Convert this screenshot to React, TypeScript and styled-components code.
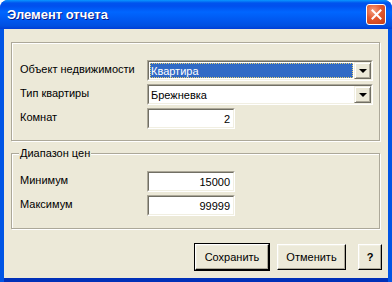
import React from "react";
import styled, { createGlobalStyle } from "styled-components";

const Global = createGlobalStyle`
  html, body { margin: 0; padding: 0; background: #ffffff; }
  body { font-family: "Liberation Sans", Arial, sans-serif; }
`;

const Window = styled.div`
  width: 392px;
  height: 282px;
  display: flex;
  flex-direction: column;
  box-sizing: border-box;
  background: #0055e5;
  border-radius: 8px 8px 0 0;
  overflow: hidden;
`;

const TitleBar = styled.div`
  height: 29px;
  flex: none;
  display: flex;
  align-items: center;
  justify-content: space-between;
  padding: 0 6px 0 7px;
  box-sizing: border-box;
  background: linear-gradient(
    to bottom,
    #0997ff 0px,
    #0053ee 3px,
    #0050ee 6px,
    #0066ff 12px,
    #0058f0 20px,
    #0050e0 26px,
    #003dd7 29px
  );
`;

const Title = styled.span`
  color: #ffffff;
  font-family: "Liberation Sans", Arial, sans-serif;
  font-weight: bold;
  font-size: 13px;
  text-shadow: 1px 1px 0 #0a1883;
`;

const CloseButton = styled.div`
  width: 20px;
  height: 21px;
  box-sizing: border-box;
  border: 1px solid #ffffff;
  border-radius: 3px;
  background: radial-gradient(circle at 35% 30%, #f5a080 0%, #e2582f 45%, #c53d14 100%);
  display: flex;
  align-items: center;
  justify-content: center;
`;

const Frame = styled.div`
  flex: 1;
  display: flex;
  margin: 0 4px 4px 4px;
  box-shadow: 0 4px 0 0 #0030b8;
`;

const Client = styled.div`
  flex: 1;
  background: #ece9d8;
  display: flex;
  flex-direction: column;
  padding: 13px 8px 0 7px;
  font-size: 11px;
  color: #000;
`;

const Group = styled.div<{ $top?: number }>`
  position: relative;
  border: 1px solid #aca899;
  box-shadow: inset 1px 1px 0 #ffffff, 1px 1px 0 #ffffff;
  margin-top: ${(p) => p.$top ?? 0}px;
`;

const Legend = styled.span`
  position: absolute;
  left: 7px;
  top: -8px;
  padding: 0 1px;
  background: #ece9d8;
  line-height: 14px;
`;

const FormGrid = styled.div<{ $pt: number; $pb: number }>`
  display: grid;
  grid-template-columns: 127px 1fr;
  row-gap: 3px;
  padding: ${(p) => p.$pt}px 6px ${(p) => p.$pb}px 8px;
`;

const Label = styled.div`
  align-self: start;
  line-height: 14px;
  padding-top: 2px;
  white-space: nowrap;
`;

const Sunken = styled.div<{ $w?: number }>`
  height: 21px;
  box-sizing: border-box;
  width: ${(p) => (p.$w ? `${p.$w}px` : "auto")};
  border-top: 1px solid #aca899;
  border-left: 1px solid #aca899;
  border-right: 1px solid #ffffff;
  border-bottom: 1px solid #ffffff;
  display: flex;
`;

const SunkenInner = styled.div<{ $align?: string }>`
  flex: 1;
  display: flex;
  align-items: center;
  justify-content: ${(p) => p.$align ?? "flex-start"};
  background: #ffffff;
  border-top: 1px solid #716f64;
  border-left: 1px solid #716f64;
  border-right: 1px solid #f1efe2;
  border-bottom: 1px solid #f1efe2;
  padding: 0 2px 0 1px;
  min-width: 0;
`;

const ComboInner = styled(SunkenInner)`
  padding: 0;
  align-items: stretch;
`;

const ComboText = styled.div<{ $selected?: boolean }>`
  flex: 1;
  margin: 1px 1px 1px 1px;
  display: flex;
  align-items: center;
  padding-left: 1px;
  box-sizing: border-box;
  color: ${(p) => (p.$selected ? "#ffffff" : "#000000")};
  background: ${(p) => (p.$selected ? "#316ac5" : "transparent")};
  outline: ${(p) => (p.$selected ? "1px dotted #e8d070" : "none")};
  outline-offset: -1px;
`;

const DropButton = styled.div`
  width: 17px;
  box-sizing: border-box;
  background: #ece9d8;
  border-top: 1px solid #f1efe2;
  border-left: 1px solid #f1efe2;
  border-right: 1px solid #716f64;
  border-bottom: 1px solid #716f64;
  box-shadow: inset 1px 1px 0 #ffffff, inset -1px -1px 0 #aca899;
  display: flex;
  align-items: center;
  justify-content: center;
`;

const Arrow = styled.div`
  width: 0;
  height: 0;
  border-left: 4px solid transparent;
  border-right: 4px solid transparent;
  border-top: 4px solid #000;
  margin-top: 1px;
`;

const FieldText = styled.span`
  padding-right: 1px;
`;

const ButtonRow = styled.div`
  display: flex;
  justify-content: flex-end;
  margin-top: 14px;
  margin-right: -3px;
`;

const Button = styled.div<{ $w: number; $default?: boolean; $ml?: number }>`
  width: ${(p) => p.$w}px;
  height: 28px;
  box-sizing: border-box;
  margin-left: ${(p) => p.$ml ?? 0}px;
  background: #ece9d8;
  border: 1px solid ${(p) => (p.$default ? "#000000" : "transparent")};
  display: flex;
  align-items: stretch;
`;

const ButtonFace = styled.div<{ $bold?: boolean }>`
  flex: 1;
  display: flex;
  align-items: center;
  justify-content: center;
  border-top: 1px solid #ffffff;
  border-left: 1px solid #ffffff;
  border-right: 1px solid #000000;
  border-bottom: 1px solid #000000;
  box-shadow: inset -1px -1px 0 #aca899, inset 1px 1px 0 #f1efe2;
  font-weight: ${(p) => (p.$bold ? "bold" : "normal")};
`;

export default function App() {
  return (
    <>
      <Global />
      <Window>
        <TitleBar>
          <Title>Элемент отчета</Title>
          <CloseButton>
            <svg width="11" height="11" viewBox="0 0 11 11">
              <path d="M1.5 1.5 L9.5 9.5 M9.5 1.5 L1.5 9.5" stroke="#fff" strokeWidth="2" strokeLinecap="square" />
            </svg>
          </CloseButton>
        </TitleBar>
        <Frame>
          <Client>
            <Group>
              <FormGrid $pt={17} $pb={11}>
                <Label>Объект недвижимости</Label>
                <Sunken>
                  <ComboInner>
                    <ComboText $selected>Квартира</ComboText>
                    <DropButton>
                      <Arrow />
                    </DropButton>
                  </ComboInner>
                </Sunken>
                <Label>Тип квартиры</Label>
                <Sunken>
                  <ComboInner>
                    <ComboText>Брежневка</ComboText>
                    <DropButton>
                      <Arrow />
                    </DropButton>
                  </ComboInner>
                </Sunken>
                <Label>Комнат</Label>
                <Sunken $w={88}>
                  <SunkenInner $align="flex-end">
                    <FieldText>2</FieldText>
                  </SunkenInner>
                </Sunken>
              </FormGrid>
            </Group>
            <Group $top={12}>
              <Legend>Диапазон цен</Legend>
              <FormGrid $pt={17} $pb={12}>
                <Label>Минимум</Label>
                <Sunken $w={88}>
                  <SunkenInner $align="flex-end">
                    <FieldText>15000</FieldText>
                  </SunkenInner>
                </Sunken>
                <Label>Максимум</Label>
                <Sunken $w={88}>
                  <SunkenInner $align="flex-end">
                    <FieldText>99999</FieldText>
                  </SunkenInner>
                </Sunken>
              </FormGrid>
            </Group>
            <ButtonRow>
              <Button $w={76} $default>
                <ButtonFace>Сохранить</ButtonFace>
              </Button>
              <Button $w={71} $ml={6}>
                <ButtonFace>Отменить</ButtonFace>
              </Button>
              <Button $w={26} $ml={10}>
                <ButtonFace $bold>?</ButtonFace>
              </Button>
            </ButtonRow>
          </Client>
        </Frame>
      </Window>
    </>
  );
}
